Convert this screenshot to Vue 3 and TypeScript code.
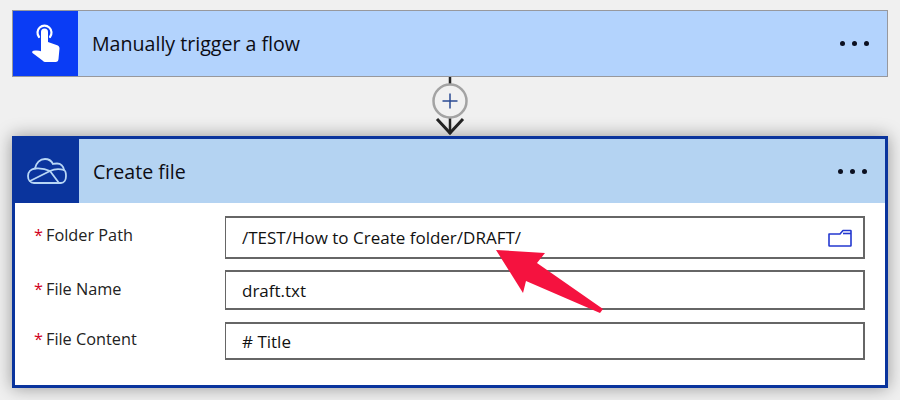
<script setup lang="ts">
interface Field {
  label: string;
  value: string;
  folder?: boolean;
}

const fields: Field[] = [
  { label: 'Folder Path', value: '/TEST/How to Create folder/DRAFT/', folder: true },
  { label: 'File Name', value: 'draft.txt' },
  { label: 'File Content', value: '# Title' },
];
</script>

<template>
  <div class="page">
    <div class="trigger">
      <div class="trigger-icon">
        <svg width="30" height="40" viewBox="0 0 30 40" fill="none">
          <path d="M8 13a7 7 0 1 1 11 0" stroke="#fff" stroke-width="2.2" stroke-linecap="round" />
          <path
            d="M10 8a3.5 3.5 0 0 1 7 0v10l8.5 3c2 .7 3 1.5 3 3.5L27.5 35c-.2 2-1 3-3 3H15c-1.500 0-2.500-.5-3.500-1.500L1.500 29c-.8-.8-.2-2 1-2.200 2.500-.5 5.500-.5 7.500.5z"
            fill="#fff"
          />
        </svg>
      </div>
      <span class="title">Manually trigger a flow</span>
      <span class="dots"><i /><i /><i /></span>
    </div>

    <div class="connector">
      <svg width="44" height="59" viewBox="0 0 44 59" fill="none">
        <path d="M22 0v57" stroke="#222" stroke-width="2.5" />
        <path d="M9 42l13 14 13-14" stroke="#222" stroke-width="3" />
        <circle cx="22" cy="24" r="16.5" fill="#f1f1f1" stroke="#a3a3a3" stroke-width="2.5" />
        <path d="M14.5 24h15M22 16.500v15" stroke="#2a4a93" stroke-width="1.5" />
      </svg>
    </div>

    <div class="action">
      <div class="action-head">
        <div class="action-icon">
          <svg width="40" height="26" viewBox="0 0 40 26" fill="none" stroke="#b7d6f5" stroke-width="1.8" stroke-linejoin="round" stroke-linecap="round">
            <path d="M7 25C3 25 1 21.5 1 18c0-4 3-7 7-7.500C9 5 13 1 18 1c3.500 0 6.500 2 8 5 1-.5 3-.5 4-.5 4 0 6.500 3 7 6.500 2 1 2 3 2 6 0 4-2 7-5 7z" />
            <path d="M8 10.500c6-.5 11 .5 15 2.500l9 12M3 23l20-10c4-2 9-2.500 14-1" />
          </svg>
        </div>
        <span class="title">Create file</span>
        <span class="dots"><i /><i /><i /></span>
      </div>
      <div class="form">
        <div v-for="field in fields" :key="field.label" class="row">
          <div class="label"><span class="req">*</span>{{ field.label }}</div>
          <div class="input">
            <span>{{ field.value }}</span>
            <svg v-if="field.folder" class="folder" width="24" height="18" viewBox="0 0 24 18" fill="none" stroke="#2438d0" stroke-width="1.6" stroke-linejoin="round">
              <path d="M1 5h11l3-3.500h7.500a.5.5 0 0 1 .5.5v14.500a.5.5 0 0 1-.5.5H1.500a.5.5 0 0 1-.5-.5z" />
              <path d="M15 4.500h8" />
            </svg>
          </div>
        </div>
      </div>
    </div>

    <svg class="arrow" width="900" height="400" viewBox="0 0 900 400">
      <path d="M496 250L545 253L537 263L603 309L600 313L526 281L523 293Z" fill="#f5123f" />
    </svg>
  </div>
</template>

<style scoped>
.page {
  position: relative;
  width: 900px;
  height: 400px;
  box-sizing: border-box;
  padding: 10px 12px 0;
  background: #f0f0f0;
  font-family: "Open Sans", "Noto Sans", sans-serif;
  color: #0c0c14;
  overflow: hidden;
}

.trigger {
  display: flex;
  align-items: center;
  height: 67px;
  box-sizing: border-box;
  border: 1px solid #97989d;
  background: #b3d3fd;
}

.trigger-icon {
  display: flex;
  align-items: center;
  justify-content: center;
  align-self: stretch;
  width: 65px;
  background: #0a3cf5;
}

.title {
  flex: 1;
  margin-left: 14px;
  font-size: 19.6px;
}

.dots {
  display: flex;
  gap: 7px;
  margin-right: 18px;
}

.dots i {
  width: 5px;
  height: 5px;
  border-radius: 50%;
  background: #0c1020;
}

.connector {
  display: flex;
  justify-content: center;
  height: 59px;
}

.action {
  height: 252px;
  box-sizing: border-box;
  border: 3px solid #0a349d;
  background: #fff;
  box-shadow: 0 0 16px rgba(0, 0, 0, 0.38);
}

.action-head {
  display: flex;
  align-items: center;
  height: 64px;
  background: #b4d3f2;
}

.action-icon {
  display: flex;
  align-items: center;
  justify-content: center;
  align-self: stretch;
  width: 64px;
  background: #0a349d;
}

.form {
  display: flex;
  flex-direction: column;
  padding: 13px 20px 0 19px;
}

.row {
  display: flex;
  margin-bottom: 11px;
}

.row:nth-child(2) {
  margin-bottom: 12px;
}

.label {
  width: 191px;
  padding-top: 8px;
  font-size: 16.3px;
  color: #222;
}

.row:last-child .label {
  padding-top: 6px;
}

.req {
  display: inline-block;
  width: 12px;
  color: #d0021b;
}

.input {
  flex: 1;
  display: flex;
  align-items: center;
  justify-content: space-between;
  height: 40px;
  box-sizing: border-box;
  padding: 0 11px 0 16px;
  border: 1px solid #666;
  border-width: 2px 2px 2px 1px;
  font-size: 17px;
  color: #111;
}

.row:first-child .input {
  height: 43px;
}

.row:last-child .input {
  height: 38px;
}

.arrow {
  position: absolute;
  left: 0;
  top: 0;
}
</style>
